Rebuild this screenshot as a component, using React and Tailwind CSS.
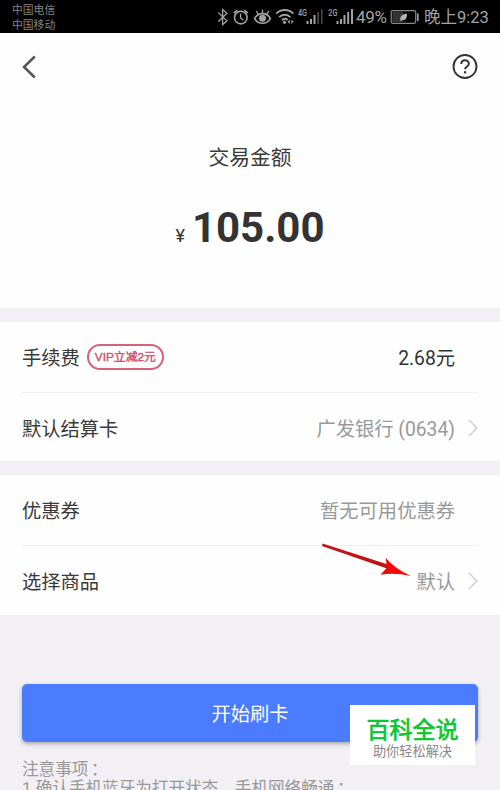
import React from 'react';

function StatusIcons() {
  return (
    <svg width="140" height="33" viewBox="215 0 140 33" fill="none" stroke="#a3a3a3" strokeWidth="1.3">
      {/* bluetooth */}
      <path d="M218.3 12.6l8.6 8.3-4.3 3.6V9.6l4.3 3.6-8.6 8.3" />
      {/* alarm */}
      <circle cx="240.8" cy="17.6" r="6.3" strokeWidth="1.6" />
      <path d="M240.6 13.6v4.3l2.8 2.3" />
      <path d="M233.9 13.2l3.4-3M247.8 13.2l-3.4-3" strokeWidth="1.6" />
      {/* eye */}
      <path d="M254.6 18.6c3.4-6.6 12.4-6.6 15.8 0-3.4 6.2-12.4 6.2-15.8 0z" strokeWidth="1.6" />
      <circle cx="262.5" cy="18.2" r="3.5" fill="#a3a3a3" stroke="none" />
      <path d="M262.5 9.5v4M256.3 11.2l2 3.2M268.7 11.2l-2 3.2" />
      {/* wifi */}
      <path d="M276.2 13.6c4.8-4.8 12.4-4.8 17.2 0M279.2 17.2c3.2-3.2 8-3.2 11.2 0M282 20.3c1.8-1.7 4-1.7 5.6-.4" strokeWidth="1.9" />
      <circle cx="284.5" cy="22.3" r="1.6" fill="#a3a3a3" stroke="none" />
      <path d="M289.8 19.5l-2.2 2.2 2.2 2.2zM291.4 19.5l2.2 2.2-2.2 2.2z" fill="#a3a3a3" stroke="none" />
      {/* signal bars */}
      <g stroke="none" fill="#a3a3a3">
        <path d="M306.5 21h2v3h-2zM310 19h2v5h-2zM313.5 15h2v9h-2z" />
        <path d="M317.3 12h1.8v12h-1.8zM321 9h1.5v15H321z" fill="#4a4a4a" />
        <path d="M336.5 21h2v3h-2zM340 19h2v5h-2zM343.5 15h2v9h-2zM347.2 12h2v12h-2zM351 9h2v15h-2z" />
      </g>
      <g stroke="none" fill="#a3a3a3" fontFamily="Roboto, sans-serif" fontWeight="500" fontSize="8.5">
        <text x="298" y="16" textLength="9" lengthAdjust="spacingAndGlyphs">4G</text>
        <text x="328.3" y="16" textLength="9" lengthAdjust="spacingAndGlyphs">2G</text>
      </g>
    </svg>
  );
}

function Battery() {
  return (
    <svg width="30" height="16" viewBox="0 0 30 16" fill="none">
      <rect x="1.2" y="1.7" width="24.5" height="12.6" rx="1.5" stroke="#8a8a8a" strokeWidth="1.2" />
      <rect x="2.4" y="2.9" width="11" height="10.2" fill="#333" />
      <path d="M10.5 12.3c-1.4-4.6 1.8-7.5 6.5-7.9.2 4-1 7.2-5 6.7z" fill="#b5b5b5" />
      <rect x="27" y="4.5" width="1.6" height="7.5" fill="#a3a3a3" />
    </svg>
  );
}

function Row({ label, value, badge, arrow, dark, className = '' }) {
  return (
    <div className={`flex items-center ${className}`}>
      <span className="pt-[4px] text-[19.3px] text-[#3a3a3a]">{label}</span>
      {badge && (
        <span className="ml-[7px] flex h-[26px] w-[77px] items-center justify-center rounded-full border-2 border-[#d8607a] pt-[2px] font-['Liberation_Sans','Noto_Sans_CJK_SC',sans-serif] text-[11.8px] text-[#d2506c] [-webkit-text-stroke:0.4px]">
          {badge}
        </span>
      )}
      <span className={`ml-auto pt-[4px] text-[19.3px] ${dark ? 'text-[#333]' : 'text-[#999]'}`}>{value}</span>
      <span className="flex w-[23px] justify-end">
        {arrow && (
          <svg width="10" height="18" viewBox="0 0 10 18" fill="none" stroke="#c8c8c8" strokeWidth="1.2">
            <path d="M1 .8l7.8 8.2L1 17.2" />
          </svg>
        )}
      </span>
    </div>
  );
}

export default function App() {
  return (
    <div className="relative flex h-[790px] w-[500px] flex-col overflow-hidden bg-[#f2f0f4] font-[Roboto,'Noto_Sans_CJK_SC',sans-serif] leading-none whitespace-nowrap">
      <header className="flex h-[33px] shrink-0 items-center bg-black text-[#a3a3a3]">
        <div className="w-[215px] pt-[2px] pl-[12px] text-[10.8px] leading-[15px] text-[#858585]">
          <div>中国电信</div>
          <div>中国移动</div>
        </div>
        <StatusIcons />
        <span className="w-[35px] pt-[2px] pl-[1px] text-[17px] tracking-[-0.3px]">49%</span>
        <Battery />
        <span className="pt-[4px] pl-[4px] text-[16.5px]">晚上9:23</span>
      </header>

      <section className="flex h-[275px] shrink-0 flex-col items-center bg-[#fefefe]">
        <nav className="flex h-[67px] w-full items-center justify-between px-[22px]">
          <svg width="14" height="24" viewBox="0 0 14 24" fill="none" stroke="#555" strokeWidth="2.5">
            <path d="M12.8 1.5L2 12l10.8 10.5" />
          </svg>
          <svg width="26" height="26" viewBox="0 0 26 26" fill="none" stroke="#333" strokeWidth="1.9">
            <circle cx="13" cy="12.5" r="11.5" />
            <path d="M9.3 10c0-4.8 7.6-4.8 7.6-.3 0 2.6-3.8 3-3.8 5.5" strokeWidth="2" />
            <path d="M13.1 17.2v2.2" strokeWidth="2.2" />
          </svg>
        </nav>
        <h1 className="mt-[48px] text-[20.8px] text-[#3a3a3a]">交易金额</h1>
        <div className="mt-[38px] flex items-baseline text-[#333]">
          <span className="mr-[7px] text-[18px]">¥</span>
          <span className="text-[42px] font-bold">105.00</span>
        </div>
      </section>

      <section className="mt-[14px] h-[139px] shrink-0 bg-[#fefefe] px-[22px]">
        <Row label="手续费" badge="VIP立减2元" value="2.68元" dark className="h-[71px] border-b border-[#f0f0f0]" />
        <Row label="默认结算卡" value="广发银行 (0634)" arrow className="h-[69px]" />
      </section>

      <section className="mt-[14px] h-[140px] shrink-0 bg-[#fefefe] px-[22px]">
        <Row label="优惠券" value="暂无可用优惠券" className="h-[71px] border-b border-[#f0f0f0]" />
        <Row label="选择商品" value="默认" arrow className="h-[69px]" />
      </section>

      <button className="mx-[22px] mt-[69px] h-[58px] shrink-0 rounded-[5px] bg-[#4b7bfe] pt-[4px] text-[19.3px] text-white shadow-[0_2px_4px_rgba(0,0,0,0.3)]">
        开始刷卡
      </button>

      <div className="mt-[19px] px-[22px] text-[16.6px] leading-[18.5px] text-[#999]">
        <p>注意事项<span className="ml-[2.5px]">：</span></p>
        <p>1.确认手机蓝牙为打开状态，手机网络畅通<span className="ml-[2.5px]">：</span></p>
      </div>

      {/* pointer to the product row */}
      <svg className="absolute top-[540px] left-[318px]" width="96" height="42" viewBox="318 540 96 42">
        <path d="M322.5 543.5L388 564.500l-1 4-65-22.500z" fill="#c01515" />
        <path d="M411 576q-16-3.500-30.500-1.300l6.500-7.200-1.300-9.700q9 11 25.300 18.200z" fill="#f20a0a" />
      </svg>

      <div className="absolute top-[705px] left-[350px] flex h-[60px] w-[125px] flex-col items-center bg-white pt-[14px]">
        <span className="text-[23px] text-[#0ac62f] [-webkit-text-stroke:0.7px]">百科全说</span>
        <span className="mt-[3px] text-[13.2px] text-[#888]">助你轻松解决</span>
      </div>
    </div>
  );
}
